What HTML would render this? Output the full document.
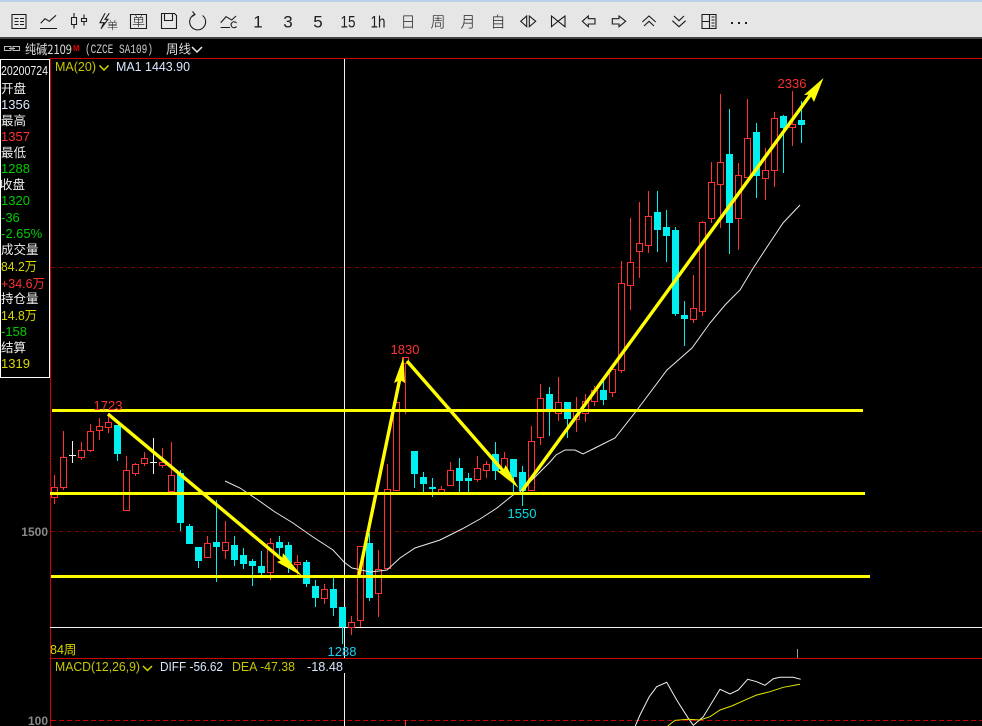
<!DOCTYPE html>
<html>
<head>
<meta charset="utf-8">
<style>
html,body{margin:0;padding:0;background:#000;width:982px;height:726px;overflow:hidden}
svg{display:block;position:absolute;left:0;top:0}
text{font-family:"Liberation Sans","Noto Sans CJK SC",sans-serif;font-size:12.5px}
.cjk{font-family:"Noto Sans CJK SC","Liberation Sans",sans-serif}
.tb{font-family:"Noto Sans CJK SC","Liberation Sans",sans-serif;font-size:15px;fill:#1c1c1c;text-anchor:middle;font-weight:300}
.dg{font-family:"Liberation Sans",sans-serif;font-size:17px;fill:#1c1c1c;text-anchor:middle}
.ic{fill:none;stroke:#1c1c1c;stroke-width:1.1}
.i{font-size:13px}
.l{font-size:12.5px}
.w{fill:#eee}.g{fill:#00cc00}.r{fill:#ff3232}.y{fill:#d8d800}.b{fill:#d8e8ff}
.c{font-size:13px;text-anchor:middle}
</style>
</head>
<body>
<svg width="982" height="726" viewBox="0 0 982 726" xmlns="http://www.w3.org/2000/svg">
<rect width="982" height="726" fill="#000"/>
<!-- toolbar -->
<rect width="982" height="2" fill="#b9d1ea"/>
<rect y="2" width="982" height="35" fill="#e6e6e6"/>
<rect y="37" width="982" height="2" fill="#444"/>
<g class="ic">
<path d="M12 14.500H26V28.500H12ZM14.500 18.500H18.500M20 18.500H24M14.500 21.500H18.500M20 21.500H24M14.500 24.500H18.500M20 24.500H24"/>
<path d="M40.700 23.300L45 18.700L49.300 21.300L56 15.300M40 28.500H57"/>
<path d="M71.500 17.500H76.500V24.500H71.500ZM74 13V17.500M74 24.500V28.500M81.500 18.500H86.500V21.500H81.500ZM84 14.500V18.500M84 21.500V25.500"/>
<path d="M105 13.300L100 22.700H104L101 28.700L108 19.300H105L109.300 13.300"/>
<path d="M130.500 14.500H146.500V28.500H130.500Z"/>
<path d="M161.500 13.500H174.500L176.500 15.500V28.500H161.500ZM164.500 13.500V20.500H172.500V13.500"/>
<path d="M202.500 15.500A8 8 0 1 1 194.500 14.500M192.500 11.500L195 14.500L192 16.500"/>
<path d="M220.700 22.700L226 16.700L231.700 20L236 16M220.700 27.500H230M236.500 23A3 3 0 1 0 236.500 26.500"/>
<path d="M520.700 21.300L526.700 16V26.700ZM529.300 16V26.700L535.700 21.300Z"/>
<path d="M551.500 16V26.700L558 21.300ZM565 16V26.700L558 21.300Z"/>
<path d="M582.300 21.300L588.300 16V18.700H595V24H588.300V26.700Z"/>
<path d="M612.300 18.700H619V16L625.700 21.300L619 26.700V24H612.300Z"/>
<path d="M642.300 22L649 16L655.700 22M644 26L649 21.300L654 26"/>
<path d="M674 16L679 20.700L684 16M672.300 20.700L679 26.700L685.700 20.700"/>
<path d="M702 14.500H716V28.500H702ZM709.500 14.500V28.500M702 21.500H709.500M711.500 17H714.500M711.500 20H714.500M711.500 23H714.500M711.500 26H714.500"/>
</g>
<rect x="731" y="22" width="2" height="2" fill="#1c1c1c"/><rect x="738" y="22" width="2" height="2" fill="#1c1c1c"/><rect x="745" y="22" width="2" height="2" fill="#1c1c1c"/>
<text x="112.500" y="29" class="tb" style="font-size:11px">单</text>
<text x="138.500" y="26" class="tb" style="font-size:13px">单</text>
<text x="258" y="27.500" class="dg">1</text>
<text x="288" y="27.500" class="dg">3</text>
<text x="318" y="27.500" class="dg">5</text>
<text x="348" y="27.500" class="dg" textLength="15" lengthAdjust="spacingAndGlyphs">15</text>
<text x="378" y="27.500" class="dg" textLength="15" lengthAdjust="spacingAndGlyphs">1h</text>
<text x="408" y="27" class="tb">日</text>
<text x="438" y="27" class="tb">周</text>
<text x="468" y="27" class="tb">月</text>
<text x="498" y="27" class="tb">自</text>

<!-- header -->
<path d="M4.500 46.500H11V50.500H4.500ZM13 46.500H19.500V50.500H13ZM9 48.500H15" fill="none" stroke="#bbb"/>
<text x="25" y="54" class="cjk" style="font-size:13px" fill="#ddd" textLength="47" lengthAdjust="spacingAndGlyphs">纯碱2109</text>
<text x="73" y="51" style="font-size:8px;font-weight:bold" fill="#e00000">M</text>
<text x="85" y="53" style="font-family:'Liberation Mono',monospace;font-size:12.500px" fill="#ccc" textLength="68" lengthAdjust="spacingAndGlyphs">(CZCE SA109)</text>
<text x="166" y="53.500" class="cjk" style="font-size:12.500px" fill="#ddd">周线</text>
<path d="M192 47L197 52L202 47" fill="none" stroke="#eee" stroke-width="1.500"/>

<!-- grid -->
<g fill="none">
<path d="M51 267.500H982M51 531.500H982" stroke="#800000" stroke-dasharray="4 4"/>
<path d="M51 720.500H982" stroke="#c00000" stroke-dasharray="5 3"/>
<path d="M50 58.500H982M50 658.500H982M50.500 58V726" stroke="#d00000"/>
<path d="M50 627.500H982" stroke="#f0f0f0"/>
<path d="M344.500 59V658M344.500 673V726" stroke="#f0f0f0"/>
<path d="M797.500 649V658" stroke="#999"/>
<path d="M405.500 720V726" stroke="#ff3232"/>
<rect x="0.500" y="59.500" width="49" height="318" stroke="#fff"/>
</g>

<!-- candles -->
<g shape-rendering="crispEdges" fill="none">
<path stroke="#ff3232" d="M54.500 475V504M63.500 431V490M81.500 442V460M90.500 424V452M99.500 418V440M108.500 413V433M126.500 456V510M135.500 463V476M144.500 452V466M162.500 448V468M171.500 442V491M207.500 536V557M225.500 521V559M270.500 538V580M297.500 555V576M324.500 584V604M351.500 616V635M360.500 546V627M378.500 550V617M387.500 464V568M396.500 402V491M405.500 357V414M441.500 486V493M450.500 462V486M477.500 456V482M486.500 461V478M504.500 452V477M531.500 426V491M540.500 384V445M558.500 377V421M576.500 397V432M585.500 394V422M594.500 386V406M612.500 369V397M621.500 261V373M630.500 218V310M639.500 202V278M648.500 191V253M693.500 275V323M702.500 221V316M711.500 162V223M720.500 94V228M738.500 163V250M747.500 99V177M765.500 148V200M774.500 112V187M792.500 91V146"/>
<path stroke="#ff3232" fill="#000" d="M51.500 487.500h6v10h-6zM60.500 457.500h6v30h-6zM78.500 450.500h6v7h-6zM87.500 431.500h6v19h-6zM96.500 426.500h6v4h-6zM105.500 422.500h6v5h-6zM123.500 470.500h6v40h-6zM132.500 464.500h6v9h-6zM141.500 458.500h6v5h-6zM159.500 462.500h6v3h-6zM168.500 475.500h6v16h-6zM204.500 543.500h6v14h-6zM222.500 542.500h6v8h-6zM267.500 543.500h6v29h-6zM294.500 562.500h6v2h-6zM321.500 589.500h6v9h-6zM348.500 622.500h6v5h-6zM357.500 546.500h6v74h-6zM375.500 569.500h6v24h-6zM384.500 489.500h6v79h-6zM393.500 402.500h6v88h-6zM402.500 357.500h6v6h-6zM438.500 489.500h6v4h-6zM447.500 470.500h6v15h-6zM474.500 468.500h6v11h-6zM483.500 464.500h6v6h-6zM501.500 458.500h6v12h-6zM528.500 441.500h6v49h-6zM537.500 398.500h6v39h-6zM555.500 402.500h6v11h-6zM573.500 410.500h6v9h-6zM582.500 401.500h6v12h-6zM591.500 390.500h6v11h-6zM609.500 369.500h6v23h-6zM618.500 283.500h6v87h-6zM627.500 262.500h6v23h-6zM636.500 243.500h6v8h-6zM645.500 216.500h6v29h-6zM690.500 308.500h6v11h-6zM699.500 222.500h6v89h-6zM708.500 182.500h6v36h-6zM717.500 162.500h6v22h-6zM735.500 175.500h6v43h-6zM744.500 138.500h6v39h-6zM762.500 170.500h6v8h-6zM771.500 118.500h6v52h-6zM789.500 124.500h6v3h-6z"/>
<path stroke="#00f0f0" d="M117.500 425V461M180.500 470V531M189.500 524V544M198.500 547V568M216.500 500V582M234.500 536V566M243.500 548V569M252.500 559V586M261.500 551V576M279.500 536V555M288.500 542V573M306.500 560V587M315.500 580V607M333.500 577V616M342.500 607V644M369.500 533V601M414.500 451V488M423.500 472V493M432.500 478V497M459.500 458V492M468.500 473V492M495.500 442V480M513.500 459V492M522.500 466V506M549.500 387V436M567.500 402V438M603.500 381V405M657.500 191V252M666.500 210V262M675.500 227V316M684.500 301V346M729.500 109V254M756.500 123V198M783.500 115V173M801.500 101V143"/>
<path fill="#00f0f0" d="M114 425h7v29h-7zM177 473h7v50h-7zM186 526h7v18h-7zM195 547h7v14h-7zM213 542h7v5h-7zM231 545h7v15h-7zM240 555h7v9h-7zM249 561h7v5h-7zM258 566h7v7h-7zM276 542h7v6h-7zM285 545h7v18h-7zM303 562h7v22h-7zM312 586h7v12h-7zM330 589h7v19h-7zM339 607h7v20h-7zM366 543h7v55h-7zM411 451h7v23h-7zM420 477h7v7h-7zM429 487h7v2h-7zM456 468h7v13h-7zM465 478h7v3h-7zM492 454h7v17h-7zM510 459h7v18h-7zM519 472h7v19h-7zM546 394h7v16h-7zM564 402h7v17h-7zM600 390h7v10h-7zM654 212h7v18h-7zM663 227h7v9h-7zM672 230h7v84h-7zM681 315h7v4h-7zM726 154h7v69h-7zM753 132h7v44h-7zM780 116h7v12h-7zM798 120h7v5h-7z"/>
<path stroke="#f0f0f0" d="M72.500 441V463M69 455.500H76M153.500 438V474M150 462.500H157"/>
</g>

<!-- MA line -->
<polyline fill="none" stroke="#e8e8e8" stroke-width="1" points="225,481 240,488 258,500 275,512 293,523 313,537 333,550 344,562 352,568 357,569 370,572 387,570 400,558 415,548 440,540 462,529 480,519 497,508 513,495 520,492 537,475 550,462 556,455 565,450 575,450 583,454 595,448 615,438 637,410 667,370 692,348 710,323 725,305 740,290 752,270 767,247 783,223 800,205"/>

<!-- MACD lines -->
<polyline fill="none" stroke="#f0f0f0" points="635.300,726 640,715 649.300,696.700 656.700,686.700 666.700,682.300 676.700,700 688.300,718.300 693.300,725.300 703.300,716.700 720,689.300 730,694 738.300,690 747.700,679.300 756.700,681.700 765,685.300 773.300,678.700 780,677.300 793.300,677.300 800.700,679.300"/>
<polyline fill="none" stroke="#e6e600" points="667.700,726 675,720.300 688.300,719.300 700,720 710,716.700 720,710 731.700,706 746.700,699.300 756.700,695 770,691.700 783.300,687.300 800,684.300"/>

<!-- yellow lines and arrows -->
<g stroke="#ffff00" fill="none">
<path stroke-width="3" d="M52 410.500H863M50 493.500H865M51 576.500H870"/>
<path stroke-width="3.400" d="M108 414L285 562M359 575L400 378M407 361L505 473M522 491L811 94"/>
</g>
<g fill="#ffff00">
<polygon points="302,576 277,562 282,560 283,553"/>
<polygon points="403.500,357 394,383 400,380 405,383"/>
<polygon points="518.500,488 496.700,470.700 503,471 505.700,465"/>
<polygon points="823.500,78 804,95 810,94.500 814,102"/>
</g>

<!-- price labels -->
<text x="108" y="410" class="c r">1723</text>
<text x="405" y="354" class="c r">1830</text>
<text x="792" y="88" class="c r">2336</text>
<text x="522" y="518" class="c" fill="#00e0e6">1550</text>
<text x="342" y="656" class="c" fill="#20d0f0">1288</text>
<text x="50" y="654" class="y" style="font-size:12.500px">84周</text>

<!-- axis -->
<text x="48" y="536" style="font-size:12px;font-weight:bold;text-anchor:end" fill="#8a8a8a">1500</text>
<text x="48" y="725" style="font-size:12px;font-weight:bold;text-anchor:end" fill="#8a8a8a">100</text>

<!-- indicator labels -->
<text x="55" y="71" fill="#c8c800" textLength="41" lengthAdjust="spacingAndGlyphs">MA(20)</text>
<path d="M99.500 65.500L104 70L108.500 65.500" fill="none" stroke="#d8d800" stroke-width="1.500"/>
<text x="116" y="71" class="b" textLength="74" lengthAdjust="spacingAndGlyphs">MA1 1443.90</text>
<text x="55" y="671" fill="#c8c800" textLength="85" lengthAdjust="spacingAndGlyphs">MACD(12,26,9)</text>
<path d="M143 666L147.500 670.500L152 666" fill="none" stroke="#d8d800" stroke-width="1.500"/>
<text x="160" y="671" class="b" textLength="63" lengthAdjust="spacingAndGlyphs">DIFF -56.62</text>
<text x="232" y="671" fill="#c8c800" textLength="63" lengthAdjust="spacingAndGlyphs">DEA -47.38</text>
<text x="307" y="671" class="b" textLength="36" lengthAdjust="spacingAndGlyphs">-18.48</text>

<!-- info panel -->
<g class="i">
<text x="1" y="75" class="w i" textLength="47" lengthAdjust="spacingAndGlyphs">20200724</text>
<text x="1" y="93" class="w l">开盘</text>
<text x="1" y="109" class="b i">1356</text>
<text x="1" y="125" class="w l">最高</text>
<text x="1" y="141" class="r i">1357</text>
<text x="1" y="157" class="w l">最低</text>
<text x="1" y="173" class="g i">1288</text>
<text x="0" y="189" class="w l">收盘</text>
<text x="1" y="205" class="g i">1320</text>
<text x="1" y="222" class="g i">-36</text>
<text x="1" y="238" class="g i">-2.65%</text>
<text x="1" y="254" class="w l">成交量</text>
<text x="1" y="271" class="y i" textLength="36" lengthAdjust="spacingAndGlyphs">84.2万</text>
<text x="1" y="288" class="r i" textLength="44" lengthAdjust="spacingAndGlyphs">+34.6万</text>
<text x="1" y="303" class="w l">持仓量</text>
<text x="1" y="320" class="y i" textLength="36" lengthAdjust="spacingAndGlyphs">14.8万</text>
<text x="1" y="336" class="g i">-158</text>
<text x="1" y="352" class="w l">结算</text>
<text x="1" y="368" class="y i">1319</text>
</g>
</svg>
</body>
</html>
